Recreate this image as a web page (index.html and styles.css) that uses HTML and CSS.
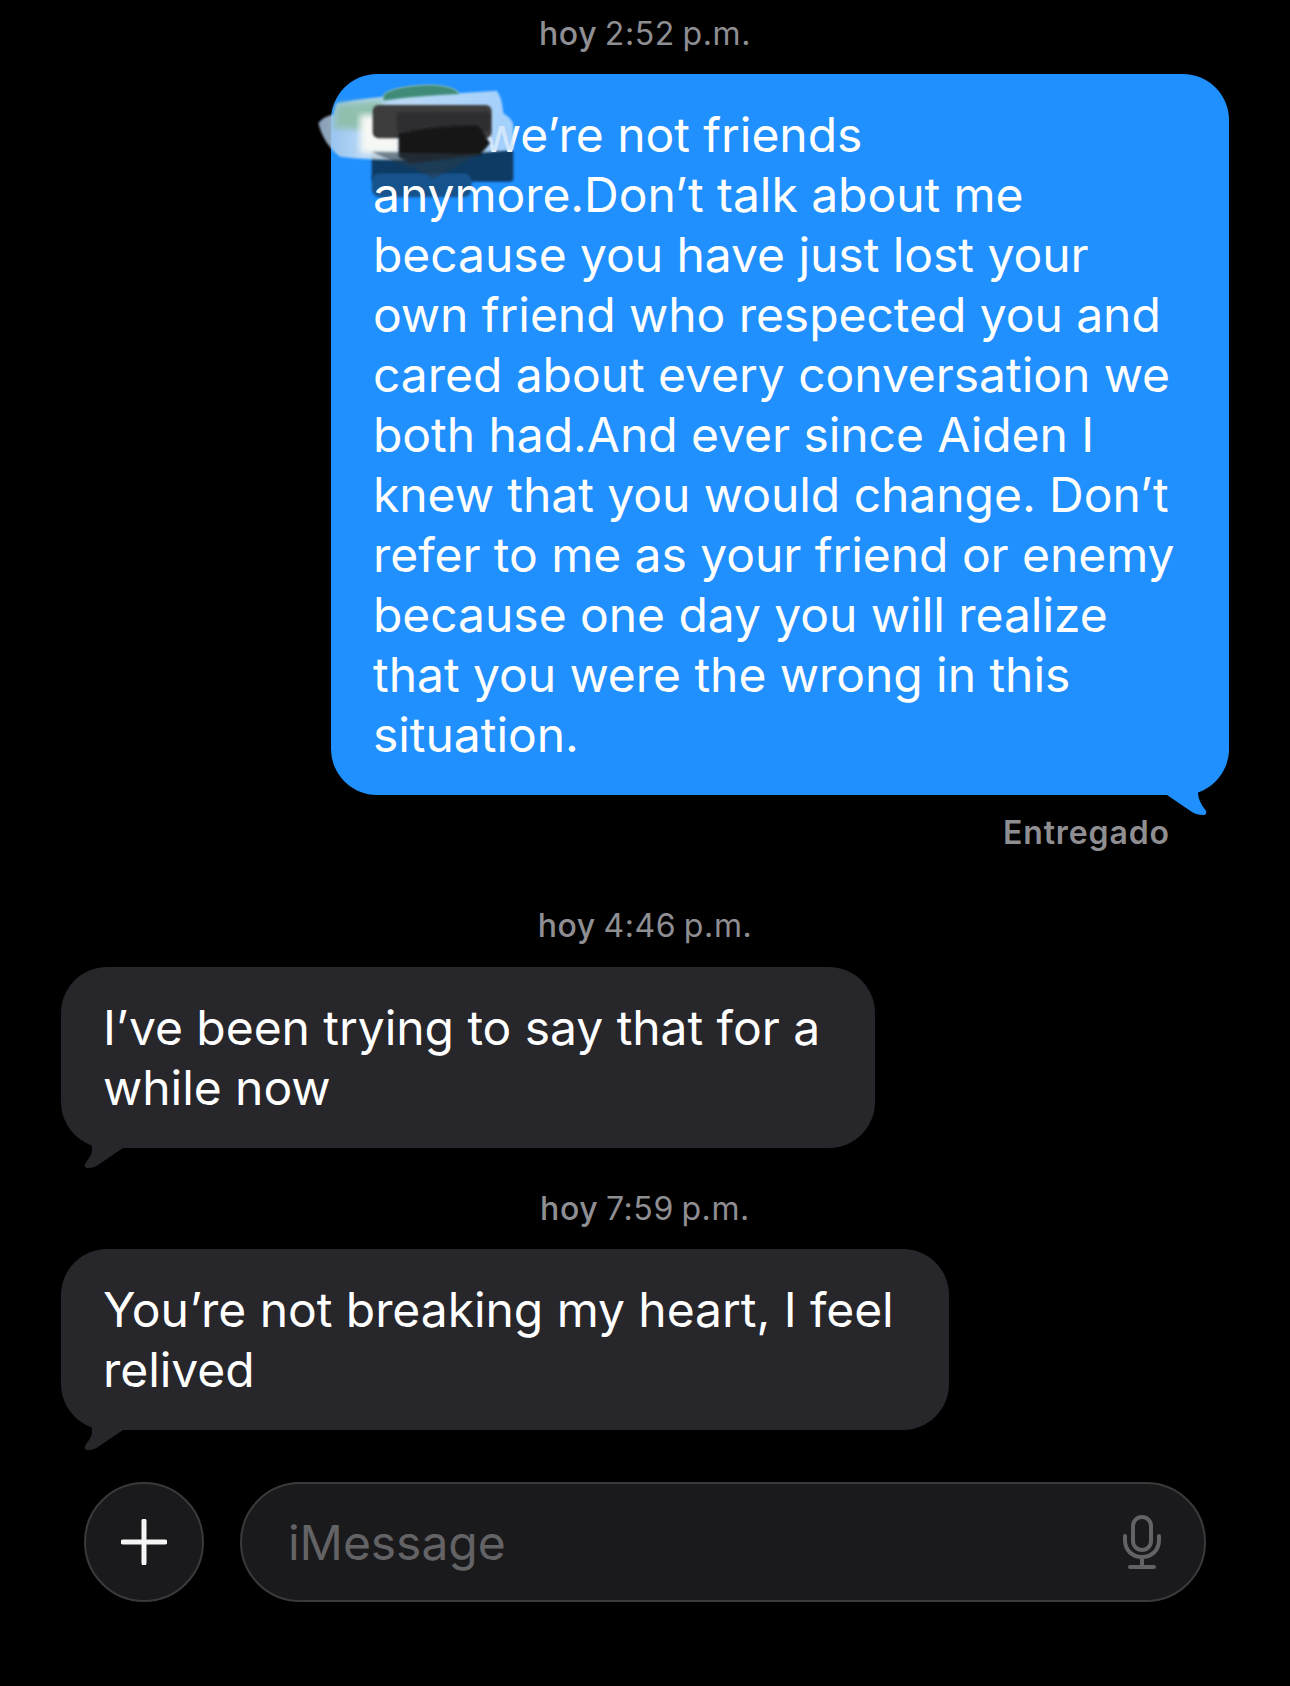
FILE: index.html
```html
<!DOCTYPE html>
<html>
  <head>
    <meta charset="utf-8">
    <title>iMessage</title>
    <link rel="stylesheet" href="styles.css">
  </head>
  <body>
    <svg class="defs" width="0" height="0">
      <filter id="soft" x="-10%" y="-10%" width="120%" height="120%"><feGaussianBlur stdDeviation="3"/></filter>
      <filter id="softer" x="-10%" y="-10%" width="120%" height="120%"><feGaussianBlur stdDeviation="9"/></filter>
      <linearGradient id="wash" x1="0" x2="1" y1="0" y2="0">
        <stop offset="0" stop-color="#a9c8e8"/>
        <stop offset="0.2" stop-color="#d5e6f3"/>
        <stop offset="0.45" stop-color="#dfeaf2"/>
        <stop offset="1" stop-color="#c4e0fd"/>
      </linearGradient>
    </svg>

    <main class="chat">
      <div class="stamp stamp-first"><span>hoy</span> 2:52 p.m.</div>

      <div class="bubble sent">
        <svg class="scribble scribble-under" viewBox="0 0 1500 690" width="500" height="230">
          <rect x="215" y="450" width="425" height="95" rx="10" fill="#0f3a63" filter="url(#soft)"/>
          <rect x="215" y="520" width="300" height="72" rx="24" fill="#14528c" filter="url(#soft)"/>
        </svg>
        <div class="bubble-text">
          <span class="covered"></span>we’re not friends<br>
          anymore.Don’t talk about me<br>
          because you have just lost your<br>
          own friend who respected you and<br>
          cared about every conversation we<br>
          both had.And ever since Aiden I<br>
          knew that you would change. Don’t<br>
          refer to me as your friend or enemy<br>
          because one day you will realize<br>
          that you were the wrong in this<br>
          situation.
        </div>
        <svg class="scribble scribble-over" viewBox="0 0 1500 690" width="500" height="230">
          <path d="M55 370C70 350 90 345 100 345L110 310C160 300 210 295 250 290C250 270 320 255 400 255C445 258 470 268 478 280L590 272C605 290 608 320 610 340C625 350 640 360 640 380L640 450L300 480C220 480 160 475 120 470C90 450 65 410 55 370Z" fill="url(#wash)" opacity="0.8" filter="url(#soft)"/>
          <path d="M250 290C250 270 320 255 400 255C445 258 470 268 478 282C400 285 320 292 250 302Z" fill="#3f8b78" filter="url(#soft)"/>
          <path d="M110 312L250 300L230 390L100 385Z" fill="#8dbda3" opacity="0.85" filter="url(#softer)"/>
          <rect x="180" y="345" width="120" height="115" fill="#f6f8f4" filter="url(#softer)"/>
          <rect x="218" y="315" width="357" height="100" rx="18" fill="#3c3c3e" filter="url(#soft)"/>
          <rect x="290" y="335" width="280" height="60" rx="10" fill="#2f2f31" filter="url(#soft)"/>
          <path d="M296 400C380 385 460 375 535 378L570 430L540 465L330 490L296 470Z" fill="#121214" filter="url(#soft)"/>
          <path d="M215 455L540 462L400 535L330 500L290 490Z" fill="#2a3a4a" opacity="0.55" filter="url(#soft)"/>
        </svg>
        <svg class="tail tail-sent" viewBox="0 0 70 75" width="70" height="75">
          <path d="M70 5C70 20 66 24 58 30C50 36 40 42 39 52C39 60 43 65 47 71C48 74 46 75 44 75C40 75 36 74 33 72L8 55L0 55L0 20Z" fill="#2090fe"/>
        </svg>
      </div>
      <div class="delivered">Entregado</div>

      <div class="stamp stamp-second"><span>hoy</span> 4:46 p.m.</div>
      <div class="bubble received received-short">
        <div class="bubble-text">
          I’ve been trying to say that for a<br>
          while now
        </div>
        <svg class="tail tail-received" viewBox="0 0 70 75" width="70" height="75">
          <path d="M0 0C0 20 10 30 22 40C28 45 31 50 31 57C31 62 27 66 24 71C23 74 25 75 27 75C31 75 34 74 37 72L62 55L70 55L70 20Z" fill="#26262b"/>
        </svg>
      </div>

      <div class="stamp stamp-third"><span>hoy</span> 7:59 p.m.</div>
      <div class="bubble received received-long">
        <div class="bubble-text">
          You’re not breaking my heart, I feel<br>
          relived
        </div>
        <svg class="tail tail-received" viewBox="0 0 70 75" width="70" height="75">
          <path d="M0 0C0 20 10 30 22 40C28 45 31 50 31 57C31 62 27 66 24 71C23 74 25 75 27 75C31 75 34 74 37 72L62 55L70 55L70 20Z" fill="#26262b"/>
        </svg>
      </div>

      <div class="composer">
        <div class="plus-button">
          <svg viewBox="0 0 46 46" width="46" height="46">
            <path d="M23 2V44M2 23H44" stroke="#f5f5f5" stroke-width="5" stroke-linecap="round" fill="none"/>
          </svg>
        </div>
        <div class="message-input">
          <span class="placeholder">iMessage</span>
          <svg class="mic" viewBox="0 0 38 54" width="38" height="54">
            <rect x="10" y="2" width="18" height="33" rx="9" fill="none" stroke="#636366" stroke-width="4"/>
            <path d="M2 21V25C2 35 9 42 19 42C29 42 36 35 36 25V21M19 42V51M7 52H31" fill="none" stroke="#636366" stroke-width="4" stroke-linecap="round"/>
          </svg>
        </div>
      </div>
    </main>
  </body>
</html>
```

FILE: styles.css
```css
/* page */
html, body {
  margin: 0;
  background-color: #000;
}

.defs {
  position: absolute;
}

.chat {
  display: flex;
  flex-direction: column;
  height: 1686px;
  overflow: hidden;
  font-family: Inter, "Liberation Sans", sans-serif;
}

/* time labels */
.stamp {
  height: 38px;
  line-height: 38px;
  text-align: center;
  font-size: 32px;
  letter-spacing: 0.6px;
  word-spacing: -2px;
  color: #8e8e93;
}

.stamp span {
  font-weight: 500;
}

.stamp-first {
  margin-top: 15px;
  margin-bottom: 21px;
}

.stamp-second {
  margin-top: 55px;
  margin-bottom: 22px;
}

.stamp-third {
  margin-top: 42px;
  margin-bottom: 21px;
}

/* bubbles */
.bubble {
  position: relative;
  box-sizing: border-box;
  padding: 31px 0 30px 42px;
  border-radius: 46px;
  color: #fff;
  font-size: 48px;
  line-height: 60px;
  letter-spacing: -0.05px;
}

.bubble-text {
  position: relative;
  z-index: 1;
  white-space: nowrap;
}

.covered {
  display: inline-block;
  width: 109px;
}

.sent {
  align-self: flex-end;
  width: 898px;
  margin-right: 61px;
  background-color: #2090fe;
}

.received {
  margin-left: 61px;
  background-color: #26262b;
}

.received-short {
  width: 814px;
}

.received-long {
  width: 888px;
}

.tail {
  position: absolute;
  z-index: 0;
}

.tail-sent {
  right: 0;
  bottom: -20px;
}

.tail-received {
  left: 0;
  bottom: -20px;
}

.delivered {
  align-self: flex-end;
  height: 38px;
  margin-top: 19px;
  margin-right: 120px;
  line-height: 38px;
  font-size: 32px;
  font-weight: 600;
  letter-spacing: 0.9px;
  color: #8e8e93;
}

/* redaction marks drawn on top of the first line */
.scribble {
  position: absolute;
  left: -31px;
  top: -74px;
  z-index: 2;
}

.scribble-under {
  z-index: 0;
}

/* bottom bar */
.composer {
  display: flex;
  gap: 36px;
  margin-top: 52px;
  padding: 0 84px;
}

.plus-button {
  display: flex;
  flex: none;
  align-items: center;
  justify-content: center;
  box-sizing: border-box;
  width: 120px;
  height: 120px;
  border: 2px solid #3a3a3c;
  border-radius: 50%;
  background-color: #1a1a1c;
}

.message-input {
  display: flex;
  flex: 1;
  align-items: center;
  justify-content: space-between;
  box-sizing: border-box;
  height: 120px;
  padding: 0 43px 0 46px;
  border: 2px solid #3a3a3c;
  border-radius: 60px;
  background-color: #1a1a1c;
}

.placeholder {
  font-size: 48px;
  letter-spacing: -0.05px;
  color: #636366;
}
```
